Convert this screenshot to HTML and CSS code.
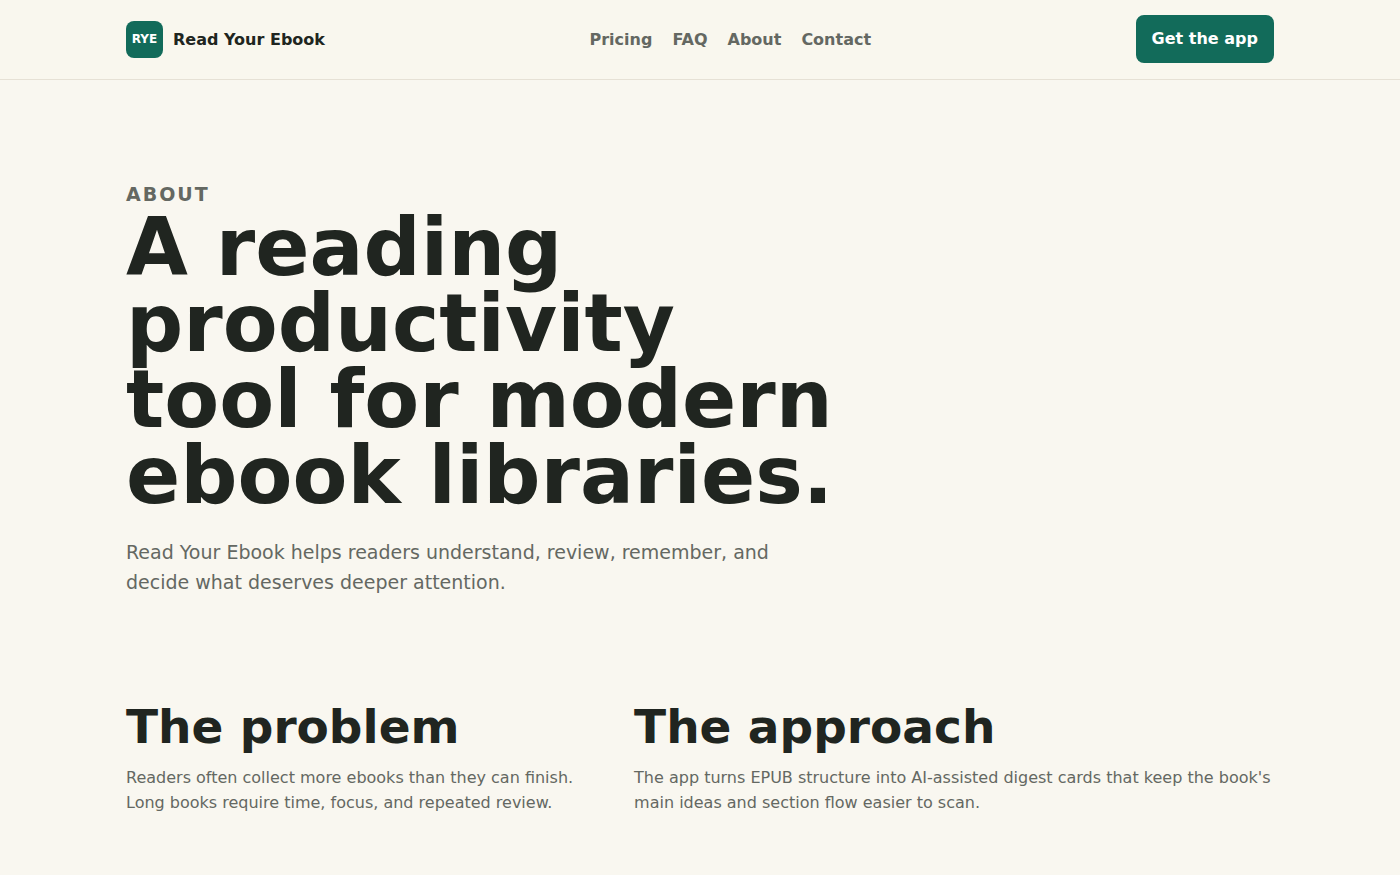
FILE: index.html
```html
<!DOCTYPE html>
<html lang="en">
<head>
    <meta charset="UTF-8">
    <meta name="viewport" content="width=device-width, initial-scale=1.0">
    <title>About - Read Your Ebook</title>
    <link rel="stylesheet" href="styles.css">
</head>
<body>
    <header class="site-header">
        <div class="container header-inner">
            <a class="brand" href="/">
                <span class="brand-mark">RYE</span>
                <span>Read Your Ebook</span>
            </a>
            <nav class="nav-links" aria-label="Main navigation">
                <a href="/pricing">Pricing</a>
                <a href="/faq">FAQ</a>
                <a href="/about">About</a>
                <a href="/contact">Contact</a>
            </nav>
            <a class="button" href="/app">Get the app</a>
        </div>
    </header>

    <main>
        <section class="page-hero container">
            <p class="eyebrow">About</p>
            <h1>A reading productivity tool for modern ebook libraries.</h1>
            <p class="lead">Read Your Ebook helps readers understand, review, remember, and decide what deserves deeper attention.</p>
        </section>

        <section class="split container">
            <div>
                <h2>The problem</h2>
                <p>Readers often collect more ebooks than they can finish. Long books require time, focus, and repeated review.</p>
            </div>
            <div>
                <h2>The approach</h2>
                <p>The app turns EPUB structure into AI-assisted digest cards that keep the book's main ideas and section flow easier to scan.</p>
            </div>
        </section>
    </main>
</body>
</html>
```
FILE: styles.css
```css
:root {
    --bg: #f9f7f0;
    --header-bg: #f9f7ee;
    --ink: #202520;
    --muted: #646862;
    --line: #e6e1d5;
    --green: #126b5a;
}

* {
    box-sizing: border-box;
}

body {
    margin: 0;
    background: var(--bg);
    color: var(--ink);
    font-family: "DejaVu Sans", sans-serif;
    font-size: 16px;
    line-height: 25px;
}

a {
    color: inherit;
    text-decoration: none;
}

h1,
h2,
p {
    margin: 0;
}

.container {
    width: 82%;
    max-width: 1148px;
    margin: 0 auto;
}

.site-header {
    background: var(--header-bg);
    border-bottom: 1px solid var(--line);
}

.header-inner {
    display: flex;
    align-items: center;
    justify-content: space-between;
    padding: 15px 0 16px;
}

.brand {
    display: flex;
    align-items: center;
    gap: 10px;
    font-weight: 700;
}

.brand-mark {
    display: grid;
    place-items: center;
    width: 37px;
    height: 37px;
    border-radius: 8px;
    background: var(--green);
    color: #fff;
    font-size: 12px;
}

.nav-links {
    display: flex;
    gap: 20px;
    color: var(--muted);
    font-weight: 700;
}

.button {
    padding: 12px 16px;
    border-radius: 8px;
    background: var(--green);
    color: #fff;
    font-weight: 700;
    line-height: 24px;
}

.page-hero {
    padding: 98px 0 106px;
}

.eyebrow {
    color: var(--muted);
    font-size: 19px;
    font-weight: 700;
    letter-spacing: 2px;
    line-height: 32px;
    text-transform: uppercase;
}

h1 {
    max-width: 740px;
    font-size: 80px;
    line-height: 76px;
}

.lead {
    max-width: 700px;
    margin-top: 23px;
    color: var(--muted);
    font-size: 19px;
    line-height: 30px;
}

.split {
    display: grid;
    grid-template-columns: 5fr 7fr;
    gap: 51px;
    padding-bottom: 60px;
}

.split h2 {
    margin-bottom: 14px;
    font-size: 47px;
    line-height: 48px;
}

.split p {
    color: var(--muted);
}

@media (max-width: 760px) {
    .header-inner {
        flex-wrap: wrap;
        gap: 16px;
    }

    h1 {
        font-size: 44px;
        line-height: 44px;
    }

    .split {
        grid-template-columns: 1fr;
    }
}
```
